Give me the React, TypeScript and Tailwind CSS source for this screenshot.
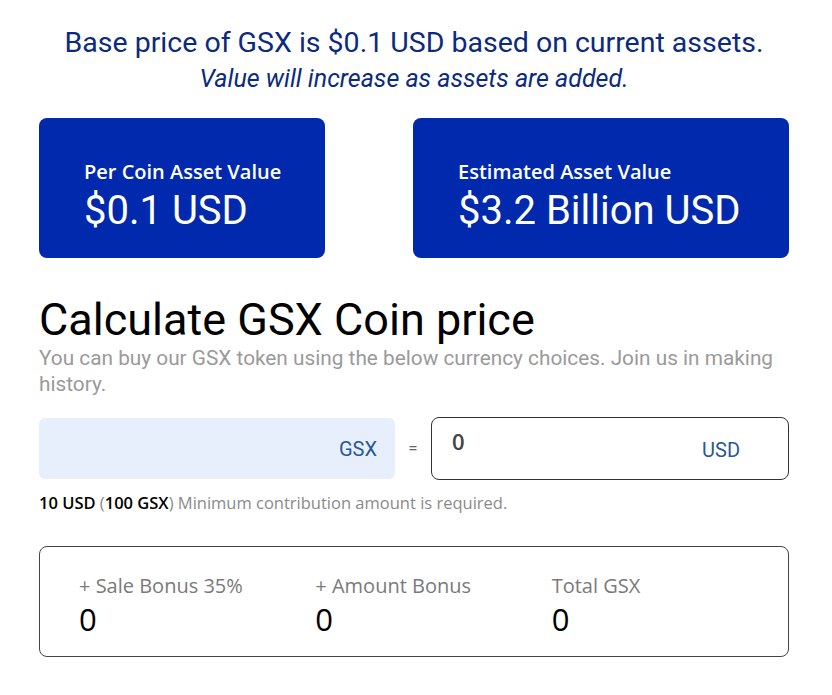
import React from 'react';

const StatCard: React.FC<{ label: string; value: string; className?: string }> = ({ label, value, className }) => (
  <div className={`h-[140px] rounded-[8px] bg-[#0029ad] flex flex-col justify-center pl-[45px] pt-[18px] ${className || ''}`}>
    <div className="text-[20px] font-semibold text-white leading-[24px] font-['Open_Sans',sans-serif]">{label}</div>
    <div className="text-[40px] text-white leading-[46px] mt-[4px] font-['Roboto',sans-serif]">{value}</div>
  </div>
);

const Bonus: React.FC<{ label: string; value: string }> = ({ label, value }) => (
  <div className="w-[237px]">
    <div className="text-[20px] text-[#7a7a7a] leading-[24px] font-['Open_Sans',sans-serif]">{label}</div>
    <div className="text-[31px] text-black leading-[34px] mt-[4px] font-['Open_Sans',sans-serif]">{value}</div>
  </div>
);

export default function App() {
  return (
    <div className="w-[832px] h-[695px] bg-white pl-[39px] pr-[43px] pt-[26px] font-['Roboto',sans-serif]">
      {/* Header */}
      <div className="text-center">
        <h1 className="text-[28.5px] leading-[34px] text-[#0b2a80]">Base price of GSX is $0.1 USD based on current assets.</h1>
        <p className="text-[25px] leading-[30px] italic text-[#0b2a80] mt-[4px]">Value will increase as assets are added.</p>
      </div>

      {/* Cards */}
      <div className="flex justify-between mt-[24px]">
        <StatCard className="w-[286px]" label="Per Coin Asset Value" value="$0.1 USD" />
        <StatCard className="w-[376px]" label="Estimated Asset Value" value="$3.2 Billion USD" />
      </div>

      {/* Calculator */}
      <h2 className="text-[45px] leading-[50px] text-black mt-[37px]">Calculate GSX Coin price</h2>
      <p className="text-[20.8px] leading-[26px] text-[#9a9a9a] pr-[10px]">
        You can buy our GSX token using the below currency choices. Join us in making history.
      </p>

      <div className="flex items-center mt-[20px]">
        <div className="w-[356px] h-[61px] rounded-[6px] bg-[#e8effc] flex items-center justify-end pr-[18px]">
          <span className="text-[20px] text-[#2b5797]">GSX</span>
        </div>
        <span className="w-[36px] text-center text-[17px] text-[#666]">=</span>
        <div className="flex-1 h-[63px] rounded-[8px] border border-[#333] flex items-start justify-between pl-[20px] pr-[48px]">
          <span className="text-[22px] font-semibold text-[#444] mt-[7px] font-['Open_Sans',sans-serif]">0</span>
          <span className="text-[20px] text-[#2b5797] mt-[17px]">USD</span>
        </div>
      </div>

      <p className="text-[16.5px] leading-[20px] text-[#8a8a8a] mt-[13px] font-['Open_Sans',sans-serif]">
        <span className="text-black font-semibold">10 USD</span> (<span className="text-black font-semibold">100 GSX</span>) Minimum contribution amount is required.
      </p>

      <div className="mt-[33px] h-[111px] rounded-[8px] border border-[#444] flex items-center pl-[39px] pt-[6px]">
        <Bonus label="+ Sale Bonus 35%" value="0" />
        <Bonus label="+ Amount Bonus" value="0" />
        <Bonus label="Total GSX" value="0" />
      </div>
    </div>
  );
}
